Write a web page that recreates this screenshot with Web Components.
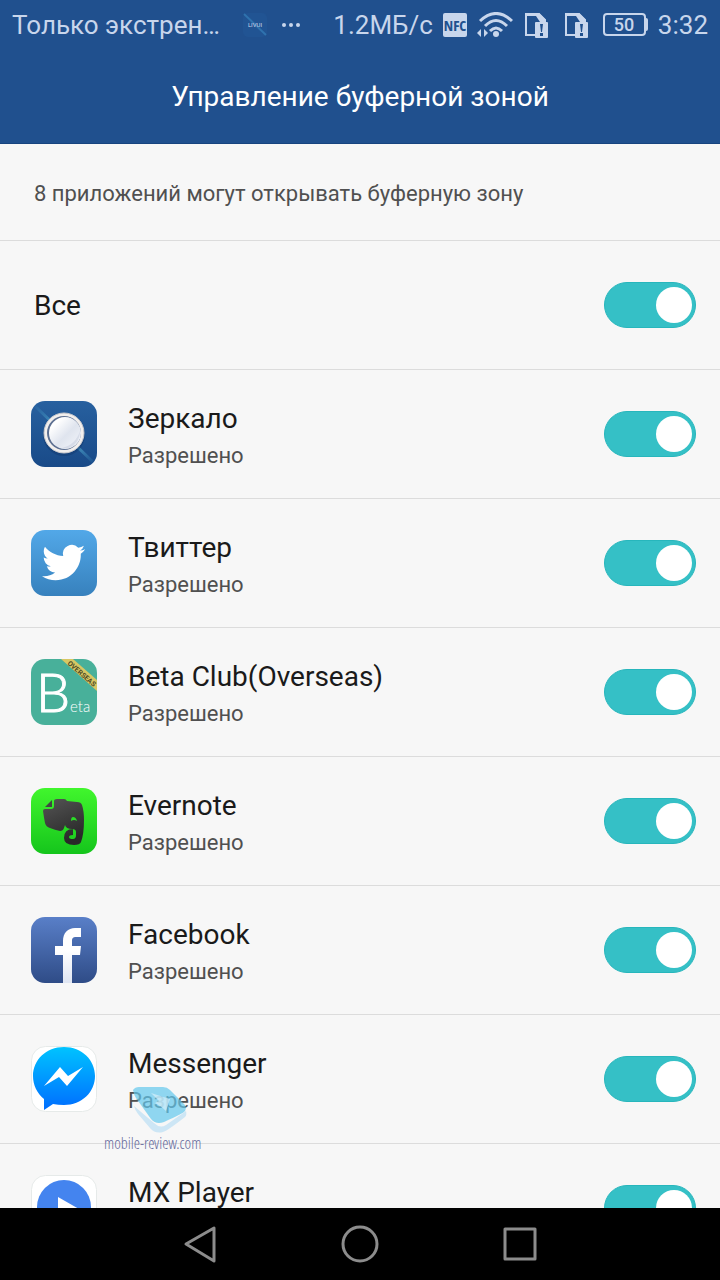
<!DOCTYPE html>
<html lang="ru">
<head>
<meta charset="utf-8">
<meta name="viewport" content="width=device-width, initial-scale=1">
<title>Управление буферной зоной</title>
<style>
  body {
    margin: 0;
    background: #f7f7f7;
    font-family: Roboto, "Noto Sans", sans-serif;
  }
</style>
</head>
<body>
<buffer-zone-page></buffer-zone-page>

<script>
const define = (name, html) => {
  customElements.define(name, class extends HTMLElement {
    connectedCallback() {
      if (this.shadowRoot) return
      this.attachShadow({ mode: "open" }).innerHTML = html
    }
  })
}

const icons = {
  mirror: `
    <linearGradient id="g" x2="0" y2="1"><stop stop-color="#27609f"/><stop offset="1" stop-color="#194a88"/></linearGradient>
    <linearGradient id="s" x2="1" y2="1"><stop stop-color="#3f91c0" stop-opacity=".2"/><stop offset=".25" stop-color="#4ba0c8"/><stop offset=".8" stop-color="#4ba0c8"/><stop offset="1" stop-color="#3f91c0" stop-opacity=".2"/></linearGradient>
    <linearGradient id="m" x2="1" y2="1"><stop offset=".2" stop-color="#fff"/><stop offset=".55" stop-color="#dfe4ee"/><stop offset="1" stop-color="#f4f6fa"/></linearGradient>
    <rect width="66" height="66" rx="14" fill="url(#g)"/>
    <path d="M4 5 62 61" stroke="url(#s)" stroke-width="3" opacity=".6"/>
    <circle cx="33" cy="34" r="21" fill="#123a70" opacity=".5"/>
    <circle cx="33" cy="32" r="20" fill="#f2efed" stroke="#c9c9cd"/>
    <circle cx="33" cy="32" r="17" fill="#5c6f91"/>
    <circle cx="34" cy="32" r="16" fill="url(#m)"/>
    <path d="M31 47c8-2 15-7 18-17 0 11-8 19-18 17z" fill="#c9d0df" opacity=".6"/>`,
  twitter: `
    <linearGradient id="g" x2="0" y2="1"><stop stop-color="#52a8e8"/><stop offset="1" stop-color="#3781bd"/></linearGradient>
    <rect width="66" height="66" rx="14" fill="url(#g)"/>
    <path transform="translate(11 11) scale(1.8)" fill="#fff" d="M23.953 4.57a10 10 0 01-2.825.775 4.958 4.958 0 002.163-2.723c-.951.555-2.005.959-3.127 1.184a4.92 4.92 0 00-8.384 4.482C7.69 8.095 4.067 6.13 1.64 3.162a4.822 4.822 0 00-.666 2.475c0 1.71.87 3.213 2.188 4.096a4.904 4.904 0 01-2.228-.616v.06a4.923 4.923 0 003.946 4.827 4.996 4.996 0 01-2.212.085 4.936 4.936 0 004.604 3.417 9.867 9.867 0 01-6.102 2.105c-.39 0-.779-.023-1.17-.067a13.995 13.995 0 007.557 2.209c9.053 0 13.998-7.496 13.998-13.985 0-.21 0-.42-.015-.63A9.935 9.935 0 0024 4.59z"/>`,
  beta: `
    <clipPath id="c"><rect width="66" height="66" rx="14"/></clipPath>
    <rect width="66" height="66" rx="14" fill="#48b09a"/>
    <path d="M30 0h12l24 21v11z" fill="#d8c763" clip-path="url(#c)"/>
    <text x="5" y="53" font-family="Lato" font-weight="300" font-size="54" fill="#fff" stroke="#fff">B</text>
    <text x="39" y="53" font-family="Lato" font-weight="300" font-size="15" fill="#fff">eta</text>
    <text transform="translate(36 5) rotate(41)" font-family="Roboto" font-weight="700" font-size="7" fill="#4d4a26">OVERSEAS</text>`,
  evernote: `
    <linearGradient id="g" x2="0" y2="1"><stop stop-color="#41f62d"/><stop offset="1" stop-color="#15c51c"/></linearGradient>
    <linearGradient id="e" x2=".4" y2="1"><stop stop-color="#555"/><stop offset="1" stop-color="#292929"/></linearGradient>
    <rect width="66" height="66" rx="14" fill="url(#g)"/>
    <path d="M14 19 21 12v7z" fill="#444"/>
    <path d="M23 13q0-2 3-2h7q2 0 3 2l10 1q4 0 5 3 2 6 2 15 0 14-3 22-1 3-7 3-10 0-10-7 0-9 9-9v6q-4 0-4 2 0 2 4 2 3 0 3-4v-3q0-3-4-3-6 0-7-4l-1 3q-1 3-4 3-5-1-10-3-4-1-5-5-1-5-2-12 0-2 2-2h6q3 0 3-3z" fill="url(#e)"/>
    <path d="M40 33q0-4 2-4 3 0 4 4-3-2-6 0z" fill="#2adc26"/>`,
  facebook: `
    <linearGradient id="g" x2="0" y2="1"><stop stop-color="#597fc8"/><stop offset="1" stop-color="#2f4c87"/></linearGradient>
    <linearGradient id="f" x2="0" y2="1"><stop offset=".4" stop-color="#fff"/><stop offset="1" stop-color="#dfe5f2"/></linearGradient>
    <rect width="66" height="66" rx="14" fill="url(#g)"/>
    <path d="M32 66V38h-8v-9h8v-5c0-8 5-13 12-13h6v9h-5c-3 0-4 1-4 4v5h9l-1 9h-8v28z" fill="url(#f)"/>`,
  messenger: `
    <linearGradient id="g" x2="0" y2="1"><stop stop-color="#00c3ff"/><stop offset="1" stop-color="#006dff"/></linearGradient>
    <rect x=".5" y=".5" width="65" height="65" rx="14" fill="#fff" stroke="#e6eae9"/>
    <path d="M33 1c18 0 31 13 31 29S51 59 33 59q-6 0-11-1l-9 6V53C6 47 2 39 2 30 2 14 15 1 33 1z" fill="url(#g)"/>
    <path d="M13 40 29 21 37 30 52 21 36 40 28 31z" fill="#fff"/>`,
  player: `
    <rect x=".5" y=".5" width="65" height="65" rx="14" fill="#fff" stroke="#e6eae9"/>
    <circle cx="33" cy="32" r="27" fill="#4484ef"/>
    <path d="M27 22v24l21-12z" fill="#fff"/>`,
}

define("live-wallpaper-icon", `
  <style>
    :host { display: block; }
    svg { display: block; }
  </style>
  <svg width="26" height="26" viewBox="0 0 26 26" aria-hidden="true">
    <rect x="1" y="1" width="24" height="24" rx="5" fill="#215493"/>
    <path d="M2 2 24 23" stroke="#2f72ae" stroke-width="2"/>
    <text x="13" y="15" text-anchor="middle" font-size="6" fill="#c9d8ea">LIVUI</text>
  </svg>
`)

define("sim-alert-icon", `
  <style>
    :host { display: block; }
    svg { display: block; }
  </style>
  <svg width="30" height="26" viewBox="0 0 30 26" aria-hidden="true">
    <path d="M12 23H3V2h13l6 6v2" fill="none" stroke="#c8d6ec" stroke-width="2"/>
    <path d="M3 1h13l7 7v2h-6l-4-6H3z" fill="#c8d6ec"/>
    <rect x="12" y="10" width="13" height="16" rx="1" fill="#c8d6ec"/>
    <path d="M17 12h3l-1 8h-1zM17 21h3v3h-3z" fill="#20508e"/>
  </svg>
`)

define("status-bar", `
  <style>
    :host {
      display: flex;
      align-items: center;
      justify-content: space-between;
      box-sizing: border-box;
      height: 50px;
      padding: 0 12px;
      color: #c8d6ec;
      font-size: 26px;
      line-height: 32px;
    }
    div { display: flex; align-items: center; gap: 10px; }
    .notices { gap: 14px; }
    .carrier { margin-right: 8px; }
    svg { display: block; }
  </style>
  <div class="notices">
    <span class="carrier">Только экстрен…</span>
    <live-wallpaper-icon></live-wallpaper-icon>
    <svg width="18" height="6" viewBox="0 0 18 6" fill="#c8d6ec" aria-hidden="true">
      <circle cx="2" cy="3" r="2"/><circle cx="9" cy="3" r="2"/><circle cx="16" cy="3" r="2"/>
    </svg>
  </div>
  <div>
    <span>1.2МБ/с</span>
    <svg width="24" height="24" viewBox="0 0 24 24">
      <rect width="24" height="24" rx="2" fill="#c8d6ec"/>
      <text x="12" y="18" text-anchor="middle" font-family="Open Sans Condensed, Roboto" font-size="15" font-weight="700" fill="#20508e">NFC</text>
    </svg>
    <svg width="36" height="26" viewBox="0 0 36 26" aria-hidden="true">
      <g fill="none" stroke="#c8d6ec" stroke-width="3">
        <path d="M3 9q16-15 32 0M8 14q11-11 22 0M13 19q6-6 12 0"/>
      </g>
      <circle cx="19" cy="22" r="3" fill="#c8d6ec"/>
      <path d="M0 21l4-4v8zM11 21l-4-4v8z" fill="#c8d6ec"/>
    </svg>
    <sim-alert-icon></sim-alert-icon>
    <sim-alert-icon></sim-alert-icon>
    <svg width="45" height="24" viewBox="0 0 45 24">
      <rect x="1" y="1" width="41" height="21" rx="3" fill="none" stroke="#c8d6ec" stroke-width="2"/>
      <path d="M42 5h1q2 0 2 2v9q0 2-2 2h-1z" fill="#c8d6ec"/>
      <text x="21" y="18" text-anchor="middle" font-size="18" font-weight="500" fill="#c8d6ec">50</text>
    </svg>
    <time>3:32</time>
  </div>
`)

define("page-header", `
  <style>
    :host {
      display: block;
      flex: none;
      background: #20508e;
      border-bottom: 1px solid #17447f;
    }
    h1 {
      margin: 0;
      padding: 29px 24px 28px;
      color: #fff;
      font-size: 28px;
      font-weight: 400;
      line-height: 36px;
      text-align: center;
    }
  </style>
  <status-bar></status-bar>
  <h1><slot></slot></h1>
`)

customElements.define("setting-row", class extends HTMLElement {
  connectedCallback() {
    if (this.shadowRoot) return
    const icon = icons[this.getAttribute("icon")]
    const status = this.getAttribute("status")
    this.attachShadow({ mode: "open" }).innerHTML = `
      <style>
        :host {
          display: flex;
          align-items: center;
          box-sizing: border-box;
          height: 129px;
          padding: 0 24px 0 31px;
          border-bottom: 1px solid #dcdcdc;
        }
        svg {
          flex: none;
          margin-right: 31px;
        }
        label {
          flex: 1;
          padding-top: 2px;
          color: #1a1a1a;
          font-size: 28px;
          line-height: 40px;
        }
        label:not(svg + label) { padding-left: 3px; }
        small {
          display: block;
          margin-top: 1px;
          color: #505050;
          font-size: 22px;
          line-height: 32px;
        }
        input {
          appearance: none;
          flex: none;
          display: flex;
          align-items: center;
          box-sizing: border-box;
          width: 92px;
          height: 46px;
          margin: 0;
          padding: 0 3px;
          border: 1px solid #27b6bc;
          border-radius: 23px;
          background: #bdbdbd;
          cursor: pointer;
        }
        input::before {
          content: "";
          width: 36px;
          height: 36px;
          border-radius: 50%;
          background: #fff;
        }
        input:checked {
          justify-content: flex-end;
          background: #35c0c6;
        }
        input:focus-visible {
          outline: 3px solid #9cdfe2;
          outline-offset: 3px;
        }
      </style>
      ${icon ? `<svg width="66" height="66" viewBox="0 0 66 66" aria-hidden="true">${icon}</svg>` : ""}
      <label for="toggle"><slot></slot>${status ? `<small>${status}</small>` : ""}</label>
      <input id="toggle" type="checkbox" role="switch" checked>
    `
  }
})

define("nav-bar", `
  <style>
    :host {
      display: flex;
      flex: none;
      justify-content: center;
      gap: 88px;
      height: 72px;
      background: #000;
    }
    button {
      width: 72px;
      padding: 0;
      border: 0;
      background: none;
    }
    svg {
      display: block;
      margin: auto;
      fill: none;
      stroke: #8c8c8c;
      stroke-width: 3;
      stroke-linejoin: round;
    }
  </style>
  <button aria-label="Назад"><svg width="40" height="40" viewBox="0 0 40 40"><path d="M34 4v33L6 20z"/></svg></button>
  <button aria-label="Домой"><svg width="40" height="40" viewBox="0 0 40 40"><circle cx="20" cy="20" r="17"/></svg></button>
  <button aria-label="Недавние"><svg width="40" height="40" viewBox="0 0 40 40"><path d="M5 5h30v30H5z"/></svg></button>
`)

define("site-watermark", `
  <style>
    :host {
      position: absolute;
      left: 104px;
      bottom: 128px;
      color: #666a9c;
      font: 300 16px/18px "Open Sans Condensed Light", "Open Sans Condensed", "Roboto Condensed", Roboto, sans-serif;
      pointer-events: none;
    }
    svg { display: block; margin-left: 28px; }
  </style>
  <svg width="56" height="48" viewBox="0 0 56 48" aria-hidden="true">
    <path d="M2 20q1 4 4 8l12 14q5 6 13 4 4-1 22-15 2-2 1-6L34 39q-6 4-12-2z" fill="#c5e3f4" opacity=".85"/>
    <path d="M1 4q2-3 6-3h24q4 0 7 3l14 14q3 3 1 7-1 2-21 11-8 3-13-3L4 12q-2-3-3-8z" fill="#62c8ec" opacity=".7"/>
    <path d="M19 7 38 13l-4 12q-5-5-11-8l4-2z" fill="#d5f0fb" opacity=".7"/>
  </svg>
  mobile-review.com
`)

define("buffer-zone-page", `
  <style>
    :host {
      position: relative;
      display: flex;
      flex-direction: column;
      height: 100vh;
    }
    main {
      flex: 1;
      min-height: 0;
      overflow: auto;
      scrollbar-width: none;
    }
    p {
      margin: 0;
      padding: 34px 34px 30px;
      border-bottom: 1px solid #dcdcdc;
      color: #505050;
      font-size: 22px;
      line-height: 32px;
    }
  </style>
  <page-header>Управление буферной зоной</page-header>
  <main>
    <p>8 приложений могут открывать буферную зону</p>
    <setting-row>Все</setting-row>
    <setting-row icon="mirror" status="Разрешено">Зеркало</setting-row>
    <setting-row icon="twitter" status="Разрешено">Твиттер</setting-row>
    <setting-row icon="beta" status="Разрешено">Beta Club(Overseas)</setting-row>
    <setting-row icon="evernote" status="Разрешено">Evernote</setting-row>
    <setting-row icon="facebook" status="Разрешено">Facebook</setting-row>
    <setting-row icon="messenger" status="Разрешено">Messenger</setting-row>
    <setting-row icon="player" status="Разрешено">MX Player</setting-row>
  </main>
  <nav-bar></nav-bar>
  <site-watermark></site-watermark>
`)
</script>
</body>
</html>
